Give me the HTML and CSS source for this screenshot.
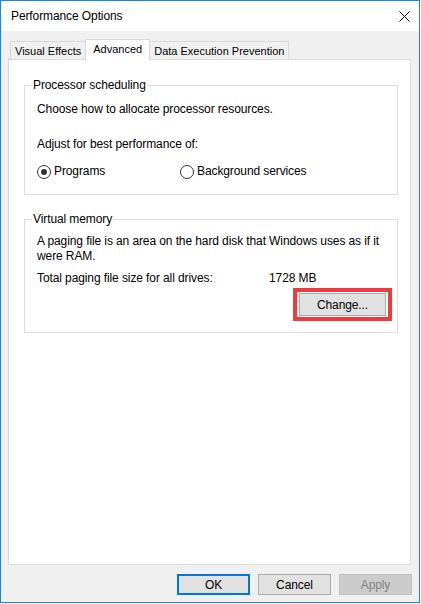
FILE: index.html
```html
<!DOCTYPE html>
<html lang="en">

<head>
    <meta charset="UTF-8">
    <meta name="viewport" content="width=device-width, initial-scale=1.0">
    <title>Performance Options</title>
    <link rel="stylesheet" href="styles.css">
</head>

<body>
    <div class="window">
        <!-- title bar -->
        <div class="titlebar">
            <span class="titlebar__text">Performance Options</span>
            <svg class="titlebar__close" width="11" height="11" viewBox="0 0 11 11">
                <path d="M0.5 0.5 L10.5 10.5 M10.5 0.5 L0.5 10.5" stroke="#000" stroke-width="1" fill="none" />
            </svg>
        </div>

        <div class="dialog">
            <!-- tabs -->
            <ul class="tabs">
                <li class="tab">Visual Effects</li>
                <li class="tab active">Advanced</li>
                <li class="tab">Data Execution Prevention</li>
            </ul>

            <div class="panel">
                <fieldset class="group">
                    <legend>Processor scheduling</legend>
                    <p class="group__text">Choose how to allocate processor resources.</p>
                    <p class="group__text adjust">Adjust for best performance of:</p>
                    <div class="radios">
                        <label class="radio">
                            <span class="radio__mark checked"></span>Programs
                        </label>
                        <label class="radio">
                            <span class="radio__mark"></span>Background services
                        </label>
                    </div>
                </fieldset>

                <fieldset class="group group--memory">
                    <legend>Virtual memory</legend>
                    <p class="group__text">A paging file is an area on the hard disk that Windows uses as if it<br>were RAM.</p>
                    <div class="total">
                        <span class="total__label">Total paging file size for all drives:</span>
                        <span>1728 MB</span>
                    </div>
                    <div class="change">
                        <div class="highlight">
                            <button class="btn btn--change">Change...</button>
                        </div>
                    </div>
                </fieldset>
            </div>

            <!-- bottom buttons -->
            <div class="actions">
                <button class="btn btn--default">OK</button>
                <button class="btn">Cancel</button>
                <button class="btn" disabled>Apply</button>
            </div>
        </div>
    </div>
</body>

</html>
```

FILE: styles.css
```css
* {
    margin: 0;
    padding: 0;
    box-sizing: border-box;
}

body {
    background-color: #fff;
    font-family: "Liberation Sans", Arial, sans-serif;
    font-size: 12px;
    line-height: 15px;
    letter-spacing: -0.1px;
    color: #000;
}

li {
    list-style: none;
}

.window {
    width: 420px;
    height: 603px;
    border: 1px solid #1b83d8;
    display: flex;
    flex-direction: column;
}

.titlebar {
    height: 30px;
    background-color: #fff;
    display: flex;
    align-items: center;
    justify-content: space-between;
    padding: 0 9px 0 10px;
}

.titlebar__close {
    display: block;
}

.dialog {
    flex: 1;
    background-color: #f0f0f0;
    padding: 8px 7px 7px 7px;
    display: flex;
    flex-direction: column;
}

/* tabs */
.tabs {
    display: flex;
    height: 20px;
    padding-left: 2px;
    position: relative;
    z-index: 1;
    font-size: 11px;
    letter-spacing: 0;
}

.tab {
    height: 18px;
    margin-top: 2px;
    padding: 0 4px;
    line-height: 18px;
    border: 1px solid #d9d9d9;
    border-bottom: none;
    background-color: #f0f0f0;
    white-space: nowrap;
}

.tab.active {
    height: 21px;
    margin-top: 0;
    margin-left: -1px;
    margin-right: -1px;
    padding: 0 7px;
    line-height: 19px;
    background-color: #fff;
}

.panel {
    flex: 1;
    margin-right: 1px;
    background-color: #fff;
    border: 1px solid #d9d9d9;
    padding-top: 18px;
}

/* group boxes */
.group {
    margin: 0 12px 17px 15px;
    border: 1px solid #dcdcdc;
    padding: 0 5px 15px 12px;
    min-width: 0;
}

.group legend {
    margin-left: -5px;
    padding: 0 1px;
}

.group__text {
    padding-top: 9px;
}

.group__text.adjust {
    padding-top: 20px;
}

.group--memory .group__text {
    padding-top: 7px;
}

.radios {
    display: flex;
    margin-top: 12px;
}

.radio {
    display: flex;
    align-items: center;
    gap: 3px;
}

.radio:first-child {
    width: 143px;
}

.radio__mark {
    width: 14px;
    height: 14px;
    border: 1px solid #333;
    border-radius: 50%;
    background-color: #fff;
    position: relative;
}

.radio__mark.checked::after {
    content: "";
    position: absolute;
    left: 3px;
    top: 3px;
    width: 6px;
    height: 6px;
    border-radius: 50%;
    background-color: #333;
}

.total {
    display: flex;
    margin-top: 7px;
}

.total__label {
    width: 232px;
}

.change {
    display: flex;
    justify-content: flex-end;
    margin-top: 2px;
    margin-bottom: -4px;
}

.highlight {
    border: 4px solid #f03a3e;
    padding: 1px 2px 1px 2px;
}

/* buttons */
.btn {
    display: block;
    width: 73px;
    height: 21px;
    font-family: inherit;
    font-size: 12px;
    letter-spacing: -0.1px;
    color: #000;
    background-color: #e1e1e1;
    border: 1px solid #adadad;
}

.btn--change {
    width: 87px;
    height: 23px;
}

.btn--default {
    border: 2px solid #0078d7;
}

.btn:disabled {
    background-color: #cccccc;
    border-color: #bfbfbf;
    color: #838383;
}

.actions {
    display: flex;
    justify-content: flex-end;
    gap: 8px;
    margin-top: 9px;
}
```
